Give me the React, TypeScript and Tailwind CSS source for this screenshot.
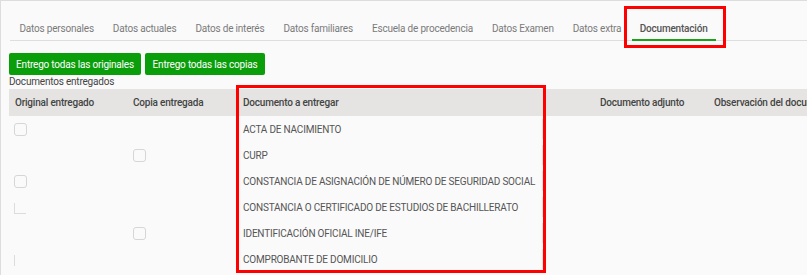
const tabs = [
  "Datos personales",
  "Datos actuales",
  "Datos de interés",
  "Datos familiares",
  "Escuela de procedencia",
  "Datos Examen",
  "Datos extra",
];

const docs = [
  { name: "ACTA DE NACIMIENTO", orig: "box", copy: null },
  { name: "CURP", orig: null, copy: "box" },
  { name: "CONSTANCIA DE ASIGNACIÓN DE NÚMERO DE SEGURIDAD SOCIAL", orig: "box", copy: null },
  { name: "CONSTANCIA O CERTIFICADO DE ESTUDIOS DE BACHILLERATO", orig: "corner", copy: null },
  { name: "IDENTIFICACIÓN OFICIAL INE/IFE", orig: null, copy: "box" },
  { name: "COMPROBANTE DE DOMICILIO", orig: "side", copy: null },
];

function Check({ kind }: { kind: string | null }) {
  if (kind === "box") {
    return <span className="block size-[13px] rounded-[3px] border border-[#d6d6d6] bg-[#fafafa]" />;
  }
  if (kind === "corner") {
    return <span className="mt-[3px] block h-[11px] w-[12px] border-b border-l border-[#dcdcdc]" />;
  }
  if (kind === "side") {
    return <span className="mt-[2px] block h-[11px] w-[12px] border-l border-[#dcdcdc]" />;
  }
  return null;
}

export default function App() {
  return (
    <div className="h-[275px] w-[807px] overflow-hidden border-l border-t border-[#dddddd] bg-[#fafafa] font-['Roboto',sans-serif] text-[10px] tracking-[-0.2px]">
      <div className="ml-[9px] mt-[13px] flex h-[27px] items-start border-b border-[#dedede]">
        {tabs.map((t) => (
          <div key={t} className="shrink-0 whitespace-nowrap px-[9.5px] pt-[7px] text-[#7a7a7a]">
            {t}
          </div>
        ))}
        <div className="relative -ml-[7px] -mt-[8px] flex h-[42px] w-[102px] shrink-0 border-[3px] border-[#ff0000] pl-[13px] pt-[12px]">
          <span className="whitespace-nowrap font-medium text-[#555555]">Documentación</span>
          <div className="absolute bottom-[4px] left-[5px] h-[2px] w-[84px] bg-[#1aa31a]" />
        </div>
      </div>

      <div className="ml-[8px] mt-[12px] flex gap-[4px]">
        <button className="h-[22px] w-[132px] rounded-[2px] bg-[#0b9e0b] text-white">
          Entrego todas las originales
        </button>
        <button className="h-[22px] w-[120px] rounded-[2px] bg-[#0b9e0b] text-white">
          Entrego todas las copias
        </button>
      </div>

      <div className="ml-[8px] leading-[13px] text-[#444444]">Documentos entregados</div>

      <div className="relative ml-[8px] mt-[1px] w-[830px]">
        <div className="flex h-[27px] items-center bg-[#e5e4e2] font-medium text-[#444444]">
          <div className="w-[118px] shrink-0 pl-[6px]">Original entregado</div>
          <div className="w-[110px] shrink-0 pl-[6px]">Copia entregada</div>
          <div className="w-[305px] shrink-0 pl-[6px]">Documento a entregar</div>
          <div className="w-[58px] shrink-0" />
          <div className="w-[114px] shrink-0">Documento adjunto</div>
          <div className="flex-1 whitespace-nowrap">Observación del documento</div>
        </div>
        {docs.map((d) => (
          <div key={d.name} className="flex h-[26px] items-center text-[#555555]">
            <div className="flex w-[118px] shrink-0 pl-[5px]">
              <Check kind={d.orig} />
            </div>
            <div className="flex w-[110px] shrink-0 pl-[6px]">
              <Check kind={d.copy} />
            </div>
            <div className="w-[305px] shrink-0 whitespace-nowrap pl-[6px]">{d.name}</div>
            <div className="h-[20px] border-l border-[#e4e4e4]" />
          </div>
        ))}
        <div className="pointer-events-none absolute -top-[4px] left-[227px] h-[188px] w-[310px] border-[3px] border-[#ff0000]" />
      </div>
    </div>
  );
}
